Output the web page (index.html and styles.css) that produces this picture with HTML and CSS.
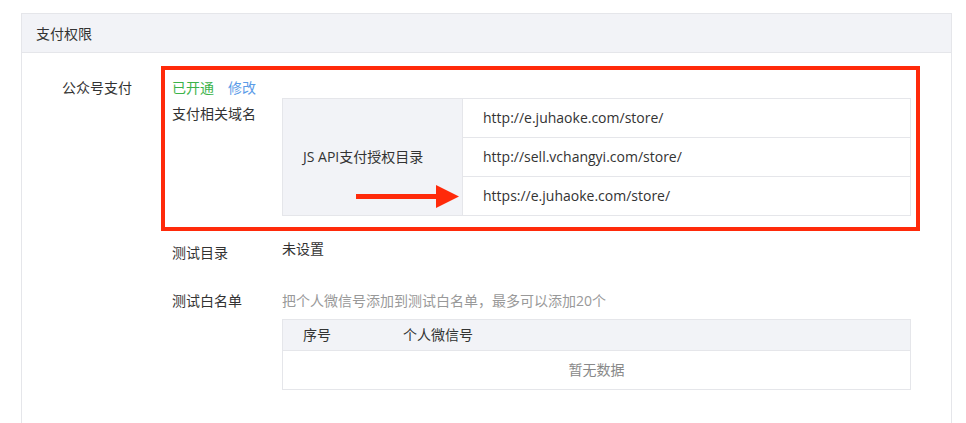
FILE: index.html
```html
<!DOCTYPE html>
<html lang="zh-CN">
<head>
<meta charset="utf-8">
<link rel="stylesheet" href="styles.css">
</head>
<body>
<div class="panel">
  <div class="panel-head">支付权限</div>
  <div class="panel-body">
    <div class="form-row">
      <div class="form-label">公众号支付</div>
      <div class="form-content">
        <div class="highlight">
          <div class="status">
            <span class="ok">已开通</span>
            <a class="edit">修改</a>
          </div>
          <div class="sub-row">
            <div class="sub-label">支付相关域名</div>
            <div class="domain-table">
              <div class="dt-key">
                JS API支付授权目录
                <svg class="arrow" width="104" height="23" viewBox="0 0 104 23">
                  <rect x="0" y="9" width="82" height="5" fill="#ff2a0a"/>
                  <polygon points="80,0 103,11.5 80,23" fill="#ff2a0a"/>
                </svg>
              </div>
              <div class="dt-val">http://e.juhaoke.com/store/</div>
              <div class="dt-val">http://sell.vchangyi.com/store/</div>
              <div class="dt-val last">https://e.juhaoke.com/store/</div>
            </div>
          </div>
        </div>
        <div class="sub-row test-dir">
          <div class="sub-label">测试目录</div>
          <div class="sub-value">未设置</div>
        </div>
        <div class="sub-row whitelist">
          <div class="sub-label">测试白名单</div>
          <div class="sub-main">
            <div class="hint">把个人微信号添加到测试白名单，最多可以添加20个</div>
            <div class="wl-table">
              <div class="wl-head">
                <div class="wl-col1">序号</div>
                <div class="wl-col2">个人微信号</div>
              </div>
              <div class="wl-empty">暂无数据</div>
            </div>
          </div>
        </div>
      </div>
    </div>
  </div>
</div>
</body>
</html>
```

FILE: styles.css
```css
* { box-sizing: border-box; }
html, body { margin: 0; padding: 0; background: #fff; }
body {
  font-family: "Open Sans", "Noto Sans CJK SC", sans-serif;
  font-size: 14px;
  line-height: 20px;
  color: #333;
}
.panel {
  margin: 13px 0 0 21px;
  width: 931px;
  border: 1px solid #e5e6ea;
  border-bottom: none;
}
.panel-head {
  height: 39px;
  padding: 10px 0 0 14px;
  background: #f2f3f7;
  border-bottom: 1px solid #e5e6ea;
}
.panel-body {
  padding: 13px 0 40px 0;
}
.form-row {
  display: flex;
}
.form-label {
  width: 110px;
  text-align: right;
  margin-right: 29px;
  padding-top: 12px;
}
.form-content {
  width: 759px;
}
.highlight {
  border: 4px solid #ff2a0a;
  padding: 8px 5px 11px 7px;
}
.status { display: flex; gap: 14px; }
.ok { color: #3cb34a; }
.edit { color: #5b9ce8; cursor: pointer; }
.sub-row { display: flex; }
.sub-label { width: 110px; flex: none; }
.highlight .sub-row .sub-label { padding-top: 6px; }
.domain-table {
  flex: 1;
  display: grid;
  grid-template-columns: 180px 1fr;
  grid-template-rows: 39px 39px 38px;
  border: 1px solid #e5e6ea;
}
.dt-key {
  grid-row: 1 / 4;
  background: #f2f3f7;
  border-right: 1px solid #e5e6ea;
  padding-left: 20px;
  display: flex;
  align-items: center;
  position: relative;
}
.arrow {
  position: absolute;
  left: 73px;
  top: 86px;
}
.dt-val {
  padding-left: 20px;
  display: flex;
  align-items: center;
  border-bottom: 1px solid #e5e6ea;
}
.dt-val.last { border-bottom: none; }
.test-dir {
  margin-top: 8px;
  padding-left: 11px;
}
.test-dir .sub-label { padding-top: 4px; }
.whitelist {
  margin-top: 28px;
  padding-left: 11px;
}
.sub-main { flex: 1; padding-right: 9px; }
.hint { color: #999; }
.wl-table {
  margin-top: 8px;
  border: 1px solid #e5e6ea;
}
.wl-head {
  display: flex;
  height: 31px;
  align-items: center;
  background: #f2f3f7;
  border-bottom: 1px solid #e5e6ea;
}
.wl-col1 { width: 100px; padding-left: 20px; }
.wl-col2 { padding-left: 20px; }
.wl-empty {
  height: 38px;
  display: flex;
  align-items: center;
  justify-content: center;
  color: #888;
}
```
